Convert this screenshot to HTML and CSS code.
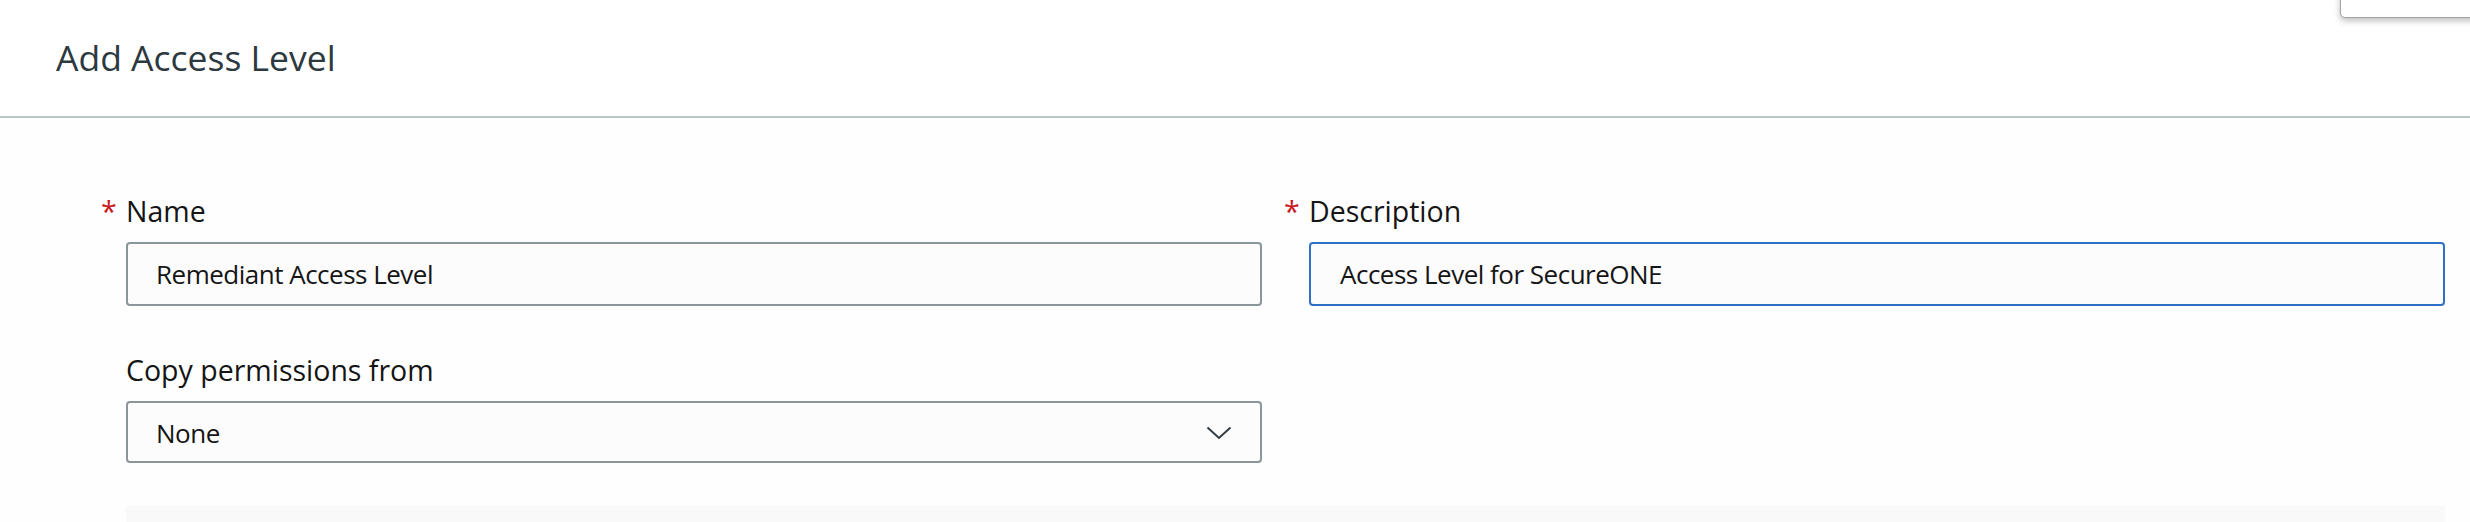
FILE: index.html
```html
<!DOCTYPE html>
<html lang="en">
<head>
<meta charset="utf-8">
<title>Add Access Level</title>
<link rel="stylesheet" href="styles.css">
</head>
<body>
<div class="page">
  <header class="header">
    <h1 class="title">Add Access Level</h1>
    <div class="popover"></div>
  </header>
  <main class="content">
    <div class="grid">
      <div class="field">
        <label class="label"><span class="req">*</span>Name</label>
        <div class="input">Remediant Access Level</div>
      </div>
      <div class="field">
        <label class="label"><span class="req">*</span>Description</label>
        <div class="input focused">Access Level for SecureONE</div>
      </div>
      <div class="field field-copy">
        <label class="label">Copy permissions from</label>
        <div class="input select">
          <span>None</span>
          <svg class="chev" width="26" height="14" viewBox="0 0 26 14"><polyline points="1.5,1.5 13,12 24.5,1.5" fill="none" stroke="#333b40" stroke-width="2"/></svg>
        </div>
      </div>
    </div>
    <div class="panel"></div>
  </main>
</div>
</body>
</html>
```
FILE: styles.css
```css
html, body {
  margin: 0;
  padding: 0;
  background: #fefefe;
}
body {
  font-family: "Open Sans", "Noto Sans", sans-serif;
  width: 2470px;
  height: 522px;
  overflow: hidden;
}
.page {
  position: relative;
}
.header {
  position: relative;
  height: 116px;
  border-bottom: 2px solid #bac5c7;
  background: #ffffff;
}
.title {
  margin: 0;
  padding: 33px 0 0 56px;
  font-size: 35.5px;
  line-height: 48px;
  font-weight: 400;
  color: #2c393f;
}
.popover {
  position: absolute;
  top: -20px;
  left: 2340px;
  width: 150px;
  height: 36px;
  background: #fff;
  border: 1px solid #a3a3a3;
  border-radius: 5px;
  box-shadow: 0 3px 6px rgba(0, 0, 0, 0.25);
}
.content {
  padding: 75px 25px 0 126px;
}
.grid {
  display: grid;
  grid-template-columns: 1fr 1fr;
  column-gap: 47px;
  row-gap: 46px;
}
.field {
  display: flex;
  flex-direction: column;
  gap: 13px;
}
.label {
  display: flex;
  font-size: 28.5px;
  line-height: 36px;
  color: #151515;
}
.req {
  width: 25px;
  margin-left: -25px;
  color: #c8171e;
}
.input {
  box-sizing: border-box;
  height: 64px;
  padding: 1px 28px 0 28px;
  border: 2px solid #8a969c;
  border-radius: 4px;
  background: #fcfcfd;
  font-size: 26px;
  letter-spacing: -0.5px;
  line-height: 58px;
  color: #151515;
}
.input.focused {
  border-color: #2e71c4;
  padding-left: 29px;
}
.select {
  height: 62px;
  line-height: 56px;
  display: flex;
  justify-content: space-between;
  align-items: center;
}
.chev {
  display: block;
}
.panel {
  margin-top: 43px;
  height: 40px;
  background: #f9f9f9;
}
```
